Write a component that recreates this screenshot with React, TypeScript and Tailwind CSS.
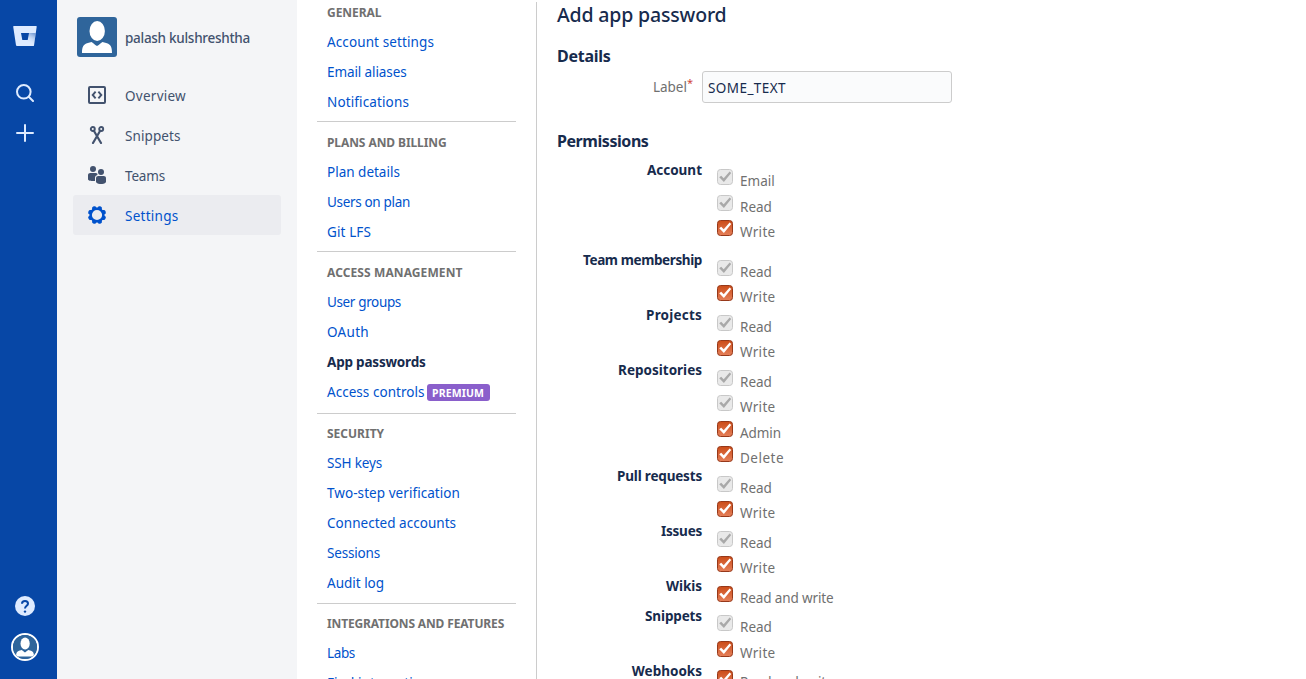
import type { ReactNode } from "react";

type Label = { text: string; track?: string };

type MenuItem = Label & { active?: boolean; premium?: boolean };

const menu: { title: Label; pad: string; items: MenuItem[] }[] = [
  {
    title: { text: "GENERAL", track: "tracking-[-0.04px]" },
    pad: "pt-[5px] pb-1",
    items: [
      { text: "Account settings", track: "tracking-[0.11px]" },
      { text: "Email aliases", track: "tracking-[-0.1px]" },
      { text: "Notifications", track: "tracking-[0.13px]" },
    ],
  },
  {
    title: { text: "PLANS AND BILLING", track: "tracking-[-0.09px]" },
    pad: "pt-[5px] pb-1",
    items: [
      { text: "Plan details" },
      { text: "Users on plan", track: "tracking-[-0.33px]" },
      { text: "Git LFS", track: "tracking-[0.12px]" },
    ],
  },
  {
    title: { text: "ACCESS MANAGEMENT", track: "tracking-[0.1px]" },
    pad: "pt-[5px] pb-1.5",
    items: [
      { text: "User groups", track: "tracking-[-0.36px]" },
      { text: "OAuth", track: "tracking-[0.31px]" },
      { text: "App passwords", track: "tracking-[-0.2px]", active: true },
      { text: "Access controls", track: "tracking-[0.04px]", premium: true },
    ],
  },
  {
    title: { text: "SECURITY" },
    pad: "pt-1 pb-[5px]",
    items: [
      { text: "SSH keys", track: "tracking-[-0.16px]" },
      { text: "Two-step verification", track: "tracking-[0.06px]" },
      { text: "Connected accounts", track: "tracking-[0.03px]" },
      { text: "Sessions", track: "tracking-[-0.18px]" },
      { text: "Audit log" },
    ],
  },
  {
    title: { text: "INTEGRATIONS AND FEATURES", track: "tracking-[-0.14px]" },
    pad: "pt-1 pb-[5px]",
    items: [
      { text: "Labs", track: "tracking-[-0.36px]" },
      { text: "Find integrations", track: "tracking-[0.09px]" },
    ],
  },
];

type Scope = Label & { locked?: boolean };

const email: Scope = { text: "Email", locked: true };
const lockedRead: Scope = { text: "Read", locked: true };
const lockedWrite: Scope = { text: "Write", track: "tracking-[0.31px]", locked: true };
const write: Scope = { text: "Write", track: "tracking-[0.31px]" };
const admin: Scope = { text: "Admin", track: "tracking-[-0.08px]" };
const del: Scope = { text: "Delete", track: "tracking-[0.49px]" };
const readAndWrite: Scope = { text: "Read and write", track: "tracking-[-0.13px]" };

const permissions: { title: Label; size: string; scopes: Scope[] }[] = [
  { title: { text: "Account" }, size: "h-[90px] [&>ul]:pt-[9.4px]", scopes: [email, lockedRead, write] },
  { title: { text: "Team membership", track: "tracking-[-0.39px]" }, size: "h-[55px] [&>ul]:pt-2.5", scopes: [lockedRead, write] },
  { title: { text: "Projects", track: "tracking-[0.21px]" }, size: "h-[55px] [&>ul]:pt-2.5", scopes: [lockedRead, write] },
  { title: { text: "Repositories" }, size: "h-[106px] [&>ul]:pt-2.5", scopes: [lockedRead, lockedWrite, admin, del] },
  { title: { text: "Pull requests", track: "tracking-[-0.18px]" }, size: "h-[55px] [&>ul]:pt-2.5", scopes: [lockedRead, write] },
  { title: { text: "Issues", track: "tracking-[-0.24px]" }, size: "h-[55px] [&>ul]:pt-2.5", scopes: [lockedRead, write] },
  { title: { text: "Wikis", track: "tracking-[-0.06px]" }, size: "h-[30px] [&>ul]:pt-2.5", scopes: [readAndWrite] },
  { title: { text: "Snippets", track: "tracking-[-0.13px]" }, size: "h-[55px] [&>ul]:pt-[9.4px]", scopes: [lockedRead, write] },
  { title: { text: "Webhooks" }, size: "h-[30px] [&>ul]:pt-[9.4px]", scopes: [readAndWrite] },
];

function BitbucketLogo() {
  return (
    <svg width="24" height="24" viewBox="0 0 24 24">
      <defs>
        <linearGradient id="bucket" x1="0.95" y1="0.1" x2="0.5" y2="0.7">
          <stop offset="0" stopColor="#0747a6" stopOpacity="0.45" />
          <stop offset="1" stopColor="#deebff" stopOpacity="0" />
        </linearGradient>
      </defs>
      <path d="M.8 2h22.400c.4 0 .6.3.5.7L21 21.400c-.1.4-.3.6-.7.6H4c-.5 0-.9-.3-1-.8L.2 2.700C.2 2.300.4 2 .8 2z" fill="#deebff" />
      <path d="M22.700 9H15l-1.100 7H9.800l-5 5.800c.2.100.4.200.6.200h15c.4 0 .6-.3.7-.6z" fill="url(#bucket)" />
      <path d="M8 9h8l-1.300 7H9.300z" fill="#0747a6" />
    </svg>
  );
}

function Silhouette() {
  return (
    <>
      <rect width="40" height="40" fill="#2f659b" />
      <ellipse cx="20.200" cy="14" rx="7.700" ry="10" fill="#fff" />
      <path d="M5 36c0-6 1.500-8.500 5-9.700l4.500-1.300c1.500 1 3 2.500 5.500 4 2.500-1.500 4-3 5.500-4l4.500 1.300c3.500 1.200 5 3.700 5 9.700z" fill="#fff" />
    </>
  );
}

function OverviewIcon() {
  return (
    <svg width="18" height="18" viewBox="0 0 18 18" fill="none" stroke="currentColor" strokeWidth="2">
      <rect x="1" y="1" width="16" height="16" rx="1" />
      <path d="M7.600 5.700 4.700 9l2.900 3.300M10.400 5.700 13.300 9l-2.900 3.300" strokeWidth="1.900" />
    </svg>
  );
}

function SnippetsIcon() {
  return (
    <svg width="16" height="18" viewBox="0 0 16 18" fill="none" stroke="currentColor" strokeLinecap="round">
      <circle cx="3.800" cy="3" r="2" strokeWidth="1.900" />
      <circle cx="12.200" cy="3" r="2" strokeWidth="1.900" />
      <path d="M5 5 12 17M11 5 4 17" strokeWidth="2.200" />
    </svg>
  );
}

function TeamsIcon() {
  return (
    <svg width="18" height="18" viewBox="0 0 18 18" fill="currentColor">
      <circle cx="5" cy="3" r="3" />
      <circle cx="13" cy="6" r="3" />
      <path d="M0 9.200C0 7.800 1 7 2.300 7h5.400c.7 0 1.300.3 1.700.8V9C7.800 9.400 7 10.500 7 12v3c-3 .2-7-.2-7-1.800z" />
      <path d="M8 12.200c0-1.400 1-2.200 2.300-2.200h5.400c1.300 0 2.300.8 2.300 2.200v3.600c0 3-10 3-10 0z" />
    </svg>
  );
}

const teeth = [22.5, 67.5, 112.5, 157.5, 202.5, 247.5, 292.5, 337.5];

function SettingsIcon() {
  return (
    <svg width="18" height="18" viewBox="0 0 18 18">
      <circle cx="9" cy="9" r="6.300" fill="none" stroke="currentColor" strokeWidth="2.400" />
      {teeth.map((angle) => (
        <path key={angle} d="M6.300 2.700 7.300.3Q9-.9 10.700.3L11.700 2.700z" fill="currentColor" transform={`rotate(${angle} 9 9)`} />
      ))}
    </svg>
  );
}

function NavItem({ icon, label, active }: { icon: ReactNode; label: Label; active?: boolean }) {
  return (
    <li className={`flex h-10 items-center rounded-[3px] pl-3 ${active ? "bg-[#ebecf0] text-[#0052cc]" : "text-[#42526e]"}`}>
      <span className="flex w-6 justify-center">{icon}</span>
      <span className={`ml-4 pt-px ${label.track ?? ""}`}>{label.text}</span>
    </li>
  );
}

function CheckBox({ locked }: { locked?: boolean }) {
  return (
    <svg width="16" height="16" viewBox="0 0 16 16" className="shrink-0">
      <defs>
        <linearGradient id="checked" x1="0" y1="0" x2="0" y2="1">
          <stop offset="0" stopColor="#cb4c18" />
          <stop offset="1" stopColor="#e5805a" />
        </linearGradient>
      </defs>
      <rect x=".5" y=".5" width="15" height="15" rx="3" fill={locked ? "#e9e9e9" : "url(#checked)"} stroke={locked ? "#c8c8c8" : "#97391a"} />
      <path d="M2.200 8.200 4.200 6.700 6.700 9.300 12.600 2.600 14.200 4 6.900 13z" fill={locked ? "#a9a9a9" : "#fff"} />
    </svg>
  );
}

export default function App() {
  return (
    <div className="flex h-[679px] w-full overflow-hidden bg-white font-['Noto_Sans',sans-serif] text-[13.5px] leading-5 text-[#172b4d]">
      <nav className="flex w-[57px] shrink-0 flex-col bg-[#0747a6] pr-[7px] text-[#deebff]">
        <div className="flex flex-col items-center pt-6">
          <BitbucketLogo />
          <svg className="mt-9" width="18" height="18" viewBox="0 0 18 18" fill="none" stroke="currentColor" strokeWidth="2" strokeLinecap="round">
            <circle cx="7.800" cy="7.800" r="6.800" />
            <path d="m13 13 4 4" />
          </svg>
          <svg className="mt-[22px]" width="18" height="18" viewBox="0 0 18 18" stroke="currentColor" strokeWidth="2" strokeLinecap="round">
            <path d="M9 1v16M1 9h16" />
          </svg>
        </div>
        <div className="mt-auto flex flex-col items-center pb-[18px]">
          <svg width="20" height="20" viewBox="0 0 20 20">
            <circle cx="10" cy="10" r="10" fill="#deebff" />
            <path d="M7 7.700C7 6 8.200 5 10 5s3 1 3 2.700c0 2-3 2.300-3 4.800" fill="none" stroke="#0747a6" strokeWidth="2" />
            <circle cx="10" cy="15.600" r="1.200" fill="#0747a6" />
          </svg>
          <span className="mt-[17px] size-7 overflow-hidden rounded-full border-2 border-white">
            <svg width="24" height="24" viewBox="0 0 40 40">
              <Silhouette />
            </svg>
          </span>
        </div>
      </nav>

      <aside className="w-60 shrink-0 bg-[#f4f5f7] px-4 pt-[17px]">
        <div className="flex items-center pl-1 text-[#42526e]">
          <svg className="rounded-[3px]" width="40" height="40" viewBox="0 0 40 40">
            <Silhouette />
          </svg>
          <span className="ml-2 pt-px font-medium tracking-[-0.28px]">palash kulshreshtha</span>
        </div>
        <ul className="mt-[18px]">
          <NavItem icon={<OverviewIcon />} label={{ text: "Overview", track: "tracking-[0.26px]" }} />
          <NavItem icon={<SnippetsIcon />} label={{ text: "Snippets", track: "tracking-[0.09px]" }} />
          <NavItem icon={<TeamsIcon />} label={{ text: "Teams", track: "tracking-[-0.17px]" }} />
          <NavItem icon={<SettingsIcon />} label={{ text: "Settings", track: "tracking-[0.27px]" }} active />
        </ul>
      </aside>

      <div className="flex flex-1 pl-5">
        <div className="-mt-2 w-[199px] shrink-0 whitespace-nowrap">
          {menu.map((section) => (
            <section key={section.title.text} className={`border-b border-[#ccc] px-2.5 ${section.pad}`}>
              <h3 className={`h-[30px] pt-px text-xs leading-[30px] font-bold text-[#707070] ${section.title.track ?? ""}`}>
                {section.title.text}
              </h3>
              <ul className="leading-[30px]">
                {section.items.map((item) => (
                  <li key={item.text} className={`flex h-[30px] ${item.active ? "font-bold" : "text-[#0052cc]"}`}>
                    <span className={item.track}>{item.text}</span>
                    {item.premium && (
                      <span className="mt-[7px] ml-0.5 h-[17px] rounded-[3px] bg-[#8a5fcb] px-[5.5px] text-[10.5px] leading-[18px] font-bold tracking-[0.13px] text-white">
                        PREMIUM
                      </span>
                    )}
                  </li>
                ))}
              </ul>
            </section>
          ))}
        </div>

        <main className="mt-0.5 ml-5 flex-1 border-l border-[#ccc] pl-5 whitespace-nowrap">
          <h1 className="text-[19.5px] leading-[26px] font-medium tracking-[-0.17px]">Add app password</h1>
          <h2 className="mt-4 text-base leading-6 font-bold tracking-[-0.27px]">Details</h2>
          <div className="mt-[3px] flex h-8">
            <label className="flex w-[145px] justify-end pt-1.5 pr-[9px] text-[#707070]">
              Label
              <span className="-mt-1 text-[11px] text-[#d04437]">*</span>
            </label>
            <input
              readOnly
              value="SOME_TEXT"
              className="w-[250px] rounded-[3px] border border-[#ccc] bg-[#fafbfc] px-[5px] pt-0.5 tracking-[0.43px] outline-none"
            />
          </div>
          <h2 className="mt-[26px] text-base leading-6 font-bold tracking-[-0.44px]">Permissions</h2>
          <div className="mt-[7px]">
            {permissions.map((group) => (
              <div key={group.title.text} className={`flex ${group.size}`}>
                <h3 className={`w-[145px] text-right font-bold ${group.title.track ?? ""}`}>{group.title.text}</h3>
                <ul className="ml-[15px] text-[#707070]">
                  {group.scopes.map((scope) => (
                    <li key={scope.text} className="flex h-[25.33px]">
                      <CheckBox locked={scope.locked} />
                      <span className={`ml-[7px] pt-0.5 ${scope.track ?? ""}`}>{scope.text}</span>
                    </li>
                  ))}
                </ul>
              </div>
            ))}
          </div>
        </main>
      </div>
    </div>
  );
}
